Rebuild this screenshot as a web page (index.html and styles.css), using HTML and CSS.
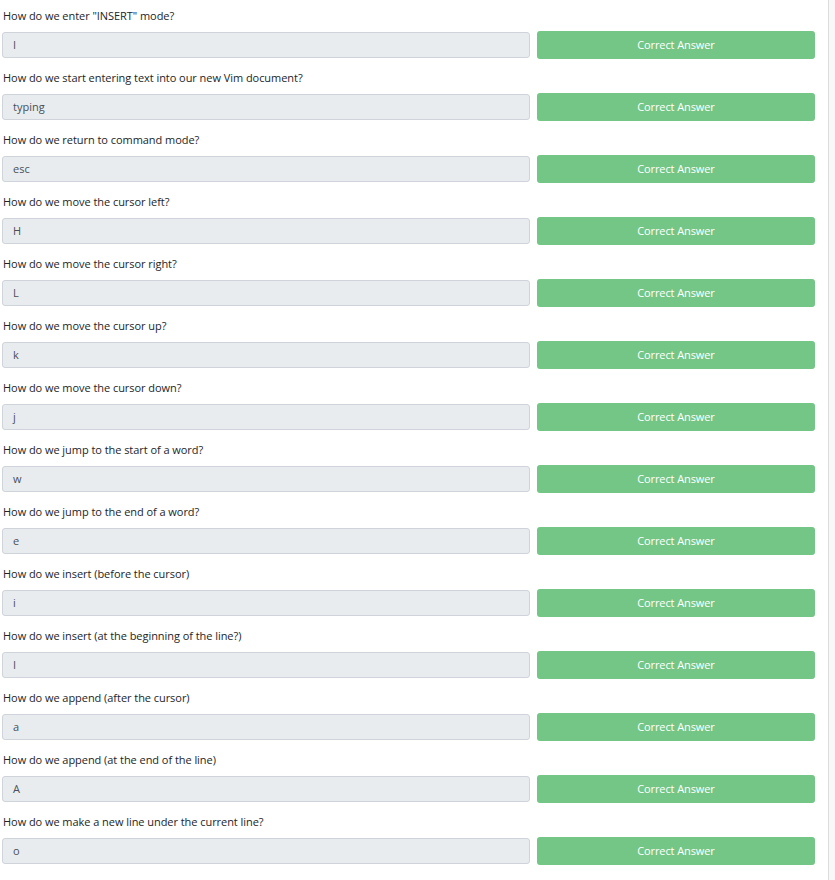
FILE: index.html
```html
<!DOCTYPE html>
<html>
<head>
<meta charset="utf-8">
<link rel="stylesheet" href="styles.css">
</head>
<body>
<div class="page">
  <div class="quiz">
    <div class="q"><div class="label">How do we enter "INSERT" mode?</div><div class="row"><div class="input">I</div><div class="btn">Correct Answer</div></div></div>
    <div class="q"><div class="label">How do we start entering text into our new Vim document?</div><div class="row"><div class="input">typing</div><div class="btn">Correct Answer</div></div></div>
    <div class="q"><div class="label">How do we return to command mode?</div><div class="row"><div class="input">esc</div><div class="btn">Correct Answer</div></div></div>
    <div class="q"><div class="label">How do we move the cursor left?</div><div class="row"><div class="input">H</div><div class="btn">Correct Answer</div></div></div>
    <div class="q"><div class="label">How do we move the cursor right?</div><div class="row"><div class="input">L</div><div class="btn">Correct Answer</div></div></div>
    <div class="q"><div class="label">How do we move the cursor up?</div><div class="row"><div class="input">k</div><div class="btn">Correct Answer</div></div></div>
    <div class="q"><div class="label">How do we move the cursor down?</div><div class="row"><div class="input">j</div><div class="btn">Correct Answer</div></div></div>
    <div class="q"><div class="label">How do we jump to the start of a word?</div><div class="row"><div class="input">w</div><div class="btn">Correct Answer</div></div></div>
    <div class="q"><div class="label">How do we jump to the end of a word?</div><div class="row"><div class="input">e</div><div class="btn">Correct Answer</div></div></div>
    <div class="q"><div class="label">How do we insert (before the cursor)</div><div class="row"><div class="input">i</div><div class="btn">Correct Answer</div></div></div>
    <div class="q"><div class="label">How do we insert (at the beginning of the line?)</div><div class="row"><div class="input">I</div><div class="btn">Correct Answer</div></div></div>
    <div class="q"><div class="label">How do we append (after the cursor)</div><div class="row"><div class="input">a</div><div class="btn">Correct Answer</div></div></div>
    <div class="q"><div class="label">How do we append (at the end of the line)</div><div class="row"><div class="input">A</div><div class="btn">Correct Answer</div></div></div>
    <div class="q"><div class="label">How do we make a new line under the current line?</div><div class="row"><div class="input">o</div><div class="btn">Correct Answer</div></div></div>
  </div>
</div>
</body>
</html>
```

FILE: styles.css
```css
html, body {
  margin: 0;
  padding: 0;
  background: #f8f8f8;
}
body {
  font-family: "Open Sans", "Noto Sans", sans-serif;
  font-size: 11px;
  color: #212529;
}
.page {
  width: 829px;
  min-height: 880px;
  background: #fff;
  border-right: 1px solid #dcdcdc;
  box-sizing: border-box;
}
.quiz {
  padding-left: 2px;
}
.q {
  padding-top: 7px;
  padding-bottom: 3px;
}
.label {
  height: 18px;
  line-height: 18px;
  padding-left: 1px;
  margin-bottom: 6px;
  white-space: nowrap;
  letter-spacing: -0.05px;
}
.row {
  display: grid;
  grid-template-columns: 528px 278px;
  column-gap: 7px;
  align-items: center;
  height: 28px;
}
.input {
  height: 26px;
  box-sizing: border-box;
  background: #e9ecef;
  border: 1px solid #ced4da;
  border-radius: 3px;
  padding-left: 10px;
  line-height: 24px;
  color: #495057;
}
.btn {
  height: 28px;
  box-sizing: border-box;
  background: #74c686;
  border-radius: 3px;
  color: #fff;
  text-align: center;
  line-height: 28px;
  letter-spacing: -0.1px;
}
```
